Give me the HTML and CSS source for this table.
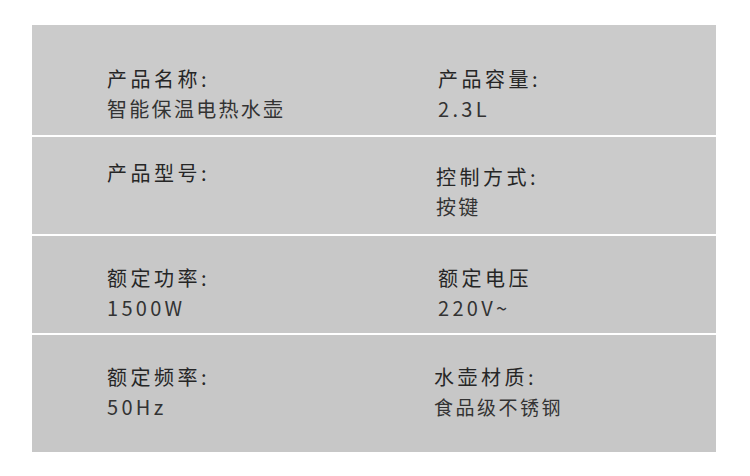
FILE: index.html
```html
<!DOCTYPE html>
<html lang="zh">
<head>
<meta charset="utf-8">
<link rel="stylesheet" href="styles.css">
</head>
<body>
<div class="panel">
  <div class="row row-1">
    <div class="cell"><div class="label">产品名称:</div><div class="value">智能保温电热水壶</div></div>
    <div class="cell"><div class="label">产品容量:</div><div class="value latin">2.3L</div></div>
  </div>
  <div class="row row-2">
    <div class="cell"><div class="label">产品型号:</div></div>
    <div class="cell cell-low"><div class="label">控制方式:</div><div class="value">按键</div></div>
  </div>
  <div class="row row-3">
    <div class="cell"><div class="label">额定功率:</div><div class="value latin">1500W</div></div>
    <div class="cell"><div class="label">额定电压</div><div class="value latin">220V~</div></div>
  </div>
  <div class="row row-4">
    <div class="cell"><div class="label">额定频率:</div><div class="value latin">50Hz</div></div>
    <div class="cell cell-left"><div class="label">水壶材质:</div><div class="value tight">食品级不锈钢</div></div>
  </div>
</div>
</body>
</html>
```
FILE: styles.css
```css
html, body {
  margin: 0;
  padding: 0;
  background: #ffffff;
}
body {
  width: 750px;
  height: 476px;
  font-family: "Noto Sans CJK SC", "Noto Sans", sans-serif;
  color: #333333;
}
.panel {
  margin: 25px 0 0 32px;
  width: 684px;
  display: flex;
  flex-direction: column;
  gap: 2px;
}
.row {
  background: #cbcbcb;
  display: grid;
  grid-template-columns: 331px 1fr;
  padding-left: 75px;
  box-sizing: border-box;
}
.row-1 { height: 110px; padding-top: 39px; }
.row-2 { height: 97px; padding-top: 21px; }
.row-3 { height: 97px; padding-top: 27px; background: #c8c8c8; }
.row-4 { height: 117px; padding-top: 27px; background: #c7c7c7; }
.cell-low { padding-top: 4px; margin-left: -2px; }
.cell-left { margin-left: -4px; }
.label {
  font-size: 20px;
  line-height: 30px;
  letter-spacing: 3.5px;
  color: #262626;
}
.value {
  font-size: 20px;
  line-height: 30px;
  letter-spacing: 2.3px;
}
.value.latin { letter-spacing: 3.3px; }
.value.tight { letter-spacing: 2.5px; font-size: 19px; }
```
